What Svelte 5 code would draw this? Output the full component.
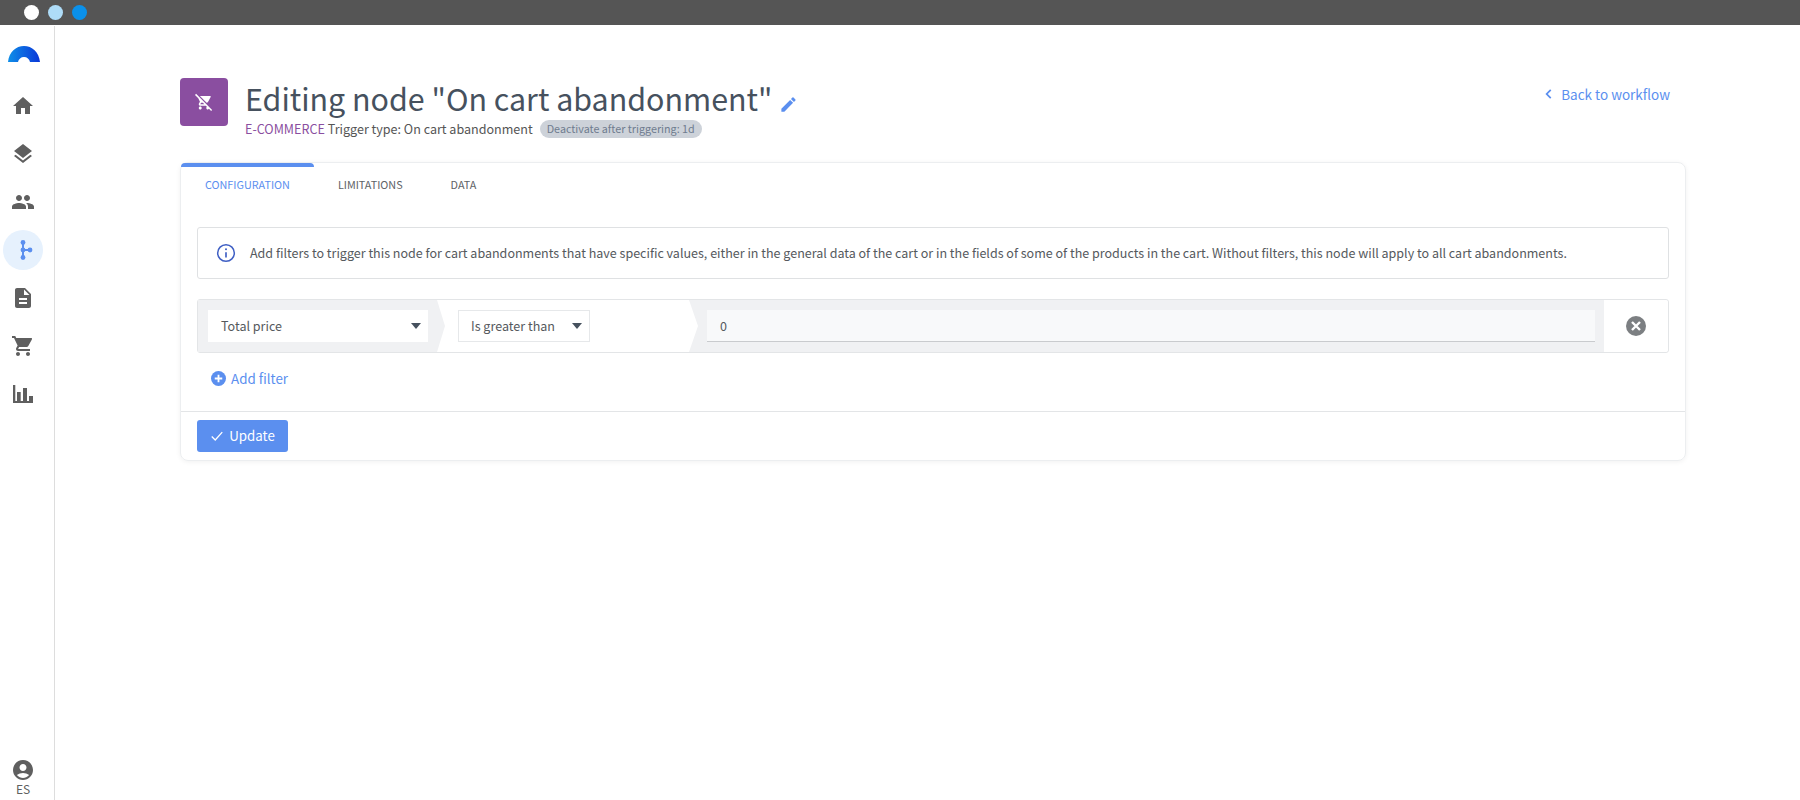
<script>
  const navItems = [
    { name: 'home', d: 'M10 20v-6h4v6h5v-8h3L12 3 2 12h3v8z' },
    { name: 'layers', d: 'M11.99 18.54l-7.37-5.73L3 14.07l9 7 9-7-1.63-1.27-7.38 5.74zM12 16l7.36-5.73L21 9l-9-7-9 7 1.63 1.27L12 16z' },
    { name: 'people', d: 'M16 11c1.66 0 2.99-1.34 2.99-3S17.66 5 16 5c-1.66 0-3 1.34-3 3s1.34 3 3 3zm-8 0c1.66 0 2.99-1.34 2.99-3S9.66 5 8 5C6.34 5 5 6.34 5 8s1.34 3 3 3zm0 2c-2.33 0-7 1.17-7 3.5V19h14v-2.5c0-2.33-4.67-3.5-7-3.5zm8 0c-.29 0-.62.02-.97.05 1.16.84 1.97 1.97 1.97 3.45V19h6v-2.5c0-2.33-4.67-3.5-7-3.5z' },
    { name: 'flow', active: true },
    { name: 'doc', d: 'M14 2H6c-1.1 0-2 .9-2 2v16c0 1.1.9 2 2 2h12c1.1 0 2-.9 2-2V8l-6-6zm2 16H8v-2h8v2zm0-4H8v-2h8v2zm-3-5V3.5L18.5 9H13z' },
    { name: 'cart', d: 'M7 18c-1.1 0-1.99.9-1.99 2S5.9 22 7 22s2-.9 2-2-.9-2-2-2zM1 2v2h2l3.6 7.59-1.35 2.45c-.16.28-.25.61-.25.96 0 1.1.9 2 2 2h12v-2H7.42c-.14 0-.25-.11-.25-.25l.03-.12.9-1.63h7.45c.75 0 1.41-.41 1.75-1.03l3.58-6.49A1 1 0 0 0 20 4H5.21l-.94-2H1zm16 16c-1.1 0-1.99.9-1.99 2s.89 2 1.99 2 2-.9 2-2-.9-2-2-2z' },
    { name: 'chart', d: 'M2 3h2.300v16H22v2H2zM6 10h3.700v9.500H6zM12 6h4v13.500h-4zM18 14h4v5.500h-4z' }
  ];
  const tabs = ['Configuration', 'Limitations', 'Data'];
  let active = 0;
</script>

<div class="topbar">
  <span class="dot white"></span>
  <span class="dot light"></span>
  <span class="dot blue"></span>
</div>

<div class="shell">
  <aside class="sidebar">
    <svg class="logo" viewBox="0 0 32 16" width="32" height="16">
      <defs>
        <linearGradient id="lg" x1="0" x2="1" y1="0" y2="0">
          <stop offset="0" stop-color="#0f8fe8" />
          <stop offset="1" stop-color="#0a36d8" />
        </linearGradient>
      </defs>
      <path d="M0 16C1 6 8 0 16 0s15 6 16 16H22c-.5-3-3-5-6-5s-5.500 2-6 5z" fill="url(#lg)" />
    </svg>
    <nav>
      {#each navItems as item}
        <div class="nav-item" class:active={item.active}>
          {#if item.name === 'flow'}
            <svg viewBox="0 0 24 24" width="24" height="24" fill="#5b8fef">
              <rect x="11" y="3" width="2" height="18" />
              <rect x="11" y="11" width="8" height="2" />
              <circle cx="12" cy="4.500" r="2.400" />
              <circle cx="12" cy="12" r="2.400" />
              <circle cx="12" cy="19.500" r="2.400" />
              <circle cx="19" cy="12" r="2.400" />
            </svg>
          {:else}
            <svg viewBox="0 0 24 24" width="24" height="24" fill="#5f5f5f"><path d={item.d} /></svg>
          {/if}
        </div>
      {/each}
    </nav>
    <div class="user">
      <svg viewBox="0 0 24 24" width="24" height="24" fill="#5f5f5f">
        <path d="M12 2C6.480 2 2 6.480 2 12s4.480 10 10 10 10-4.480 10-10S17.520 2 12 2zm0 4c1.930 0 3.500 1.570 3.500 3.500S13.930 13 12 13s-3.500-1.570-3.500-3.500S10.070 6 12 6zm0 14c-2.030 0-4.430-.82-6.140-2.880C7.620 15.800 9.700 15 12 15s4.380.8 6.140 2.120C16.430 19.180 14.030 20 12 20z" />
      </svg>
      <span>ES</span>
    </div>
  </aside>

  <main>
    <header>
      <div class="node-icon">
        <svg viewBox="0 0 24 24" width="18" height="18" fill="#fff">
          <path d="M1.410 1.130L0 2.540l4.390 4.390 2.210 4.660-1.350 2.450c-.16.280-.25.610-.25.960 0 1.100.9 2 2 2h7.460l1.380 1.380c-.5.360-.83.950-.83 1.620 0 1.100.89 2 1.990 2 .67 0 1.260-.33 1.620-.84L21.460 24l1.410-1.410L1.410 1.130zM7.420 15c-.14 0-.25-.11-.25-.25l.03-.12.9-1.630h2.360l2 2H7.420zm8.130-2c.75 0 1.410-.41 1.750-1.030l3.580-6.490A1 1 0 0 0 20 4H6.540l9.010 9zM7 18c-1.100 0-1.990.9-1.990 2S5.900 22 7 22s2-.9 2-2-.9-2-2-2z" />
        </svg>
      </div>
      <div class="heading">
        <h1>Editing node "On cart abandonment"
          <svg viewBox="0 0 24 24" width="19" height="19" fill="#5b8fef"><path d="M3 17.250V21h3.750L17.810 9.940l-3.750-3.750L3 17.250zM20.710 7.040a1 1 0 0 0 0-1.410l-2.340-2.340a1 1 0 0 0-1.410 0l-1.830 1.830 3.750 3.750 1.830-1.830z" /></svg>
        </h1>
        <div class="subtitle">
          <span class="category">E-COMMERCE</span>
          <span>Trigger type: On cart abandonment</span>
          <span class="badge">Deactivate after triggering: 1d</span>
        </div>
      </div>
      <a class="back" href="#back">
        <svg viewBox="0 0 24 24" width="14" height="14" fill="none" stroke="#5b8fef" stroke-width="3"><path d="M15 5l-7 7 7 7" /></svg>
        Back to workflow
      </a>
    </header>

    <section class="card">
      <div class="tabs">
        {#each tabs as tab, i}
          <div class="tab" class:selected={i === active}>{tab}</div>
        {/each}
      </div>

      <div class="body">
        <div class="info">
          <svg viewBox="0 0 24 24" width="20" height="20" fill="none" stroke="#3f5fc4" stroke-width="1.800">
            <circle cx="12" cy="12" r="10" />
            <path d="M12 11v6.500" stroke-width="2" />
            <circle cx="12" cy="7.500" r="1.200" fill="#3f5fc4" stroke="none" />
          </svg>
          <p>Add filters to trigger this node for cart abandonments that have specific values, either in the general data of the cart or in the fields of some of the products in the cart. Without filters, this node will apply to all cart abandonments.</p>
        </div>

        <div class="filter">
          <div class="segment first">
            <div class="select wide"><span>Total price</span><i class="caret"></i></div>
          </div>
          <div class="segment second">
            <div class="select bordered"><span>Is greater than</span><i class="caret"></i></div>
          </div>
          <div class="segment third">
            <div class="value">0</div>
          </div>
          <div class="remove">
            <svg viewBox="0 0 20 20" width="20" height="20">
              <circle cx="10" cy="10" r="10" fill="#7c7f82" />
              <path d="M6 6l8 8M14 6l-8 8" stroke="#fff" stroke-width="2.400" />
            </svg>
          </div>
        </div>

        <a class="add" href="#add">
          <svg viewBox="0 0 20 20" width="15" height="15">
            <circle cx="10" cy="10" r="10" fill="#5b8fef" />
            <path d="M10 5v10M5 10h10" stroke="#fff" stroke-width="2.400" />
          </svg>
          Add filter
        </a>
      </div>

      <footer>
        <button type="button">
          <svg viewBox="0 0 16 16" width="14" height="14" fill="none" stroke="#fff" stroke-width="1.500"><path d="M2 8.500l4 4 8-9" /></svg>
          Update
        </button>
      </footer>
    </section>
  </main>
</div>

<style>
  :global(body) {
    background: #fff;
    font-family: "Noto Sans CJK JP", "Open Sans", sans-serif;
    color: #4b4f53;
  }
  .topbar {
    height: 25px;
    background: #555;
    display: flex;
    align-items: center;
    gap: 9px;
    padding-left: 24px;
  }
  .dot {
    width: 15px;
    height: 15px;
    border-radius: 50%;
  }
  .white { background: #fff; }
  .light { background: #aedcf8; }
  .blue { background: #0a90ea; }

  .shell {
    display: flex;
    height: 775px;
    overflow: hidden;
  }
  .sidebar {
    width: 54px;
    box-sizing: content-box;
    border-right: 1px solid #ddd;
    display: flex;
    flex-direction: column;
    align-items: flex-start;
    padding-left: 0;
    margin-top: 1px;
  }
  .logo {
    margin-top: 20px;
    margin-left: 8px;
  }
  nav {
    margin-top: 24px;
    margin-left: 3px;
    display: flex;
    flex-direction: column;
    gap: 8px;
  }
  .nav-item {
    width: 40px;
    height: 40px;
    border-radius: 50%;
    display: flex;
    align-items: center;
    justify-content: center;
  }
  .nav-item.active {
    background: #e6f1fd;
  }
  .user {
    margin-top: auto;
    margin-bottom: 4px;
    margin-left: 11px;
    display: flex;
    flex-direction: column;
    align-items: center;
    font-size: 12px;
    line-height: 14px;
    color: #5f5f5f;
  }

  main {
    flex: 1;
    padding: 53px 114px 0 125px;
    min-width: 0;
  }
  header {
    display: flex;
    align-items: flex-start;
    width: 1490px;
  }
  .node-icon {
    width: 48px;
    height: 48px;
    border-radius: 4px;
    background: #8a4ea0;
    display: flex;
    align-items: center;
    justify-content: center;
  }
  .heading {
    margin-left: 17px;
    flex: 1;
  }
  h1 {
    margin: 0;
    font-size: 30.400px;
    font-weight: 400;
    line-height: 40px;
    color: #46515e;
  }
  h1 svg {
    vertical-align: -3px;
  }
  .subtitle {
    display: flex;
    align-items: center;
    gap: 3px;
    font-size: 12.550px;
    line-height: 18px;
    margin-top: 2px;
    color: #555;
  }
  .category { color: #8a4ea0; }
  .badge {
    margin-left: 4px;
    padding: 0 7px;
    border-radius: 9px;
    background: #cdd2d9;
    color: #6f7c8f;
    font-size: 10.750px;
  }
  .back {
    margin-top: 6px;
    display: flex;
    align-items: center;
    gap: 5px;
    font-size: 13.500px;
    line-height: 20px;
    color: #5b8fef;
    text-decoration: none;
  }

  .card {
    margin-top: 24px;
    width: 1506px;
    height: 299px;
    box-sizing: border-box;
    border: 1px solid #eceef0;
    border-radius: 8px;
    box-shadow: 0 1px 5px rgba(0, 0, 0, 0.06);
    display: flex;
    flex-direction: column;
  }
  .tabs {
    display: flex;
    height: 41px;
  }
  .tab {
    padding: 0 24px 4px;
    display: flex;
    align-items: center;
    font-size: 10.800px;
    text-transform: uppercase;
    color: #5e6266;
    border-top: 4px solid transparent;
  }
  .tab.selected {
    color: #5b8fef;
    border-top-color: #5b8fef;
    border-radius: 4px 4px 0 0;
    padding: 0 24px 4px;
  }
  .body {
    flex: 1;
    padding: 23px 16px 0;
  }
  .info {
    height: 52px;
    box-sizing: border-box;
    border: 1px solid #dfe1e3;
    border-radius: 3px;
    display: flex;
    align-items: center;
    gap: 14px;
    padding-left: 18px;
  }
  .info p {
    margin: 0 0 1px;
    font-size: 12.530px;
    color: #55595d;
  }
  .filter {
    margin-top: 20px;
    height: 54px;
    box-sizing: border-box;
    border: 1px solid #e3e5e7;
    border-radius: 3px;
    display: flex;
    align-items: stretch;
  }
  .segment {
    display: flex;
    align-items: center;
    background: #f0f1f3;
  }
  .first {
    width: 247px;
    padding-left: 10px;
    clip-path: polygon(0 0, 239px 0, 100% 50%, 239px 100%, 0 100%);
    box-sizing: border-box;
  }
  .second {
    background: #fff;
    width: 244px;
    padding-left: 13px;
    box-sizing: border-box;
  }
  .third {
    flex: 1;
    padding-left: 18px;
    padding-right: 9px;
    clip-path: polygon(0 0, 100% 0, 100% 100%, 0 100%, 9px 50%);
  }
  .select {
    height: 32px;
    box-sizing: border-box;
    background: #fff;
    display: flex;
    align-items: center;
    justify-content: space-between;
    padding: 0 7px 1px 13px;
    font-size: 12.550px;
    color: #55595d;
  }
  .wide { width: 220px; }
  .bordered {
    width: 132px;
    border: 1px solid #e6e8ea;
    padding-left: 12px;
  }
  .caret {
    width: 0;
    height: 0;
    border-left: 5px solid transparent;
    border-right: 5px solid transparent;
    border-top: 6px solid #46515e;
  }
  .value {
    flex: 1;
    height: 32px;
    box-sizing: border-box;
    background: #f8f9fa;
    border-bottom: 1px solid #c9cbce;
    padding-left: 13px;
    font-size: 12.550px;
    line-height: 31px;
    color: #55595d;
  }
  .remove {
    width: 64px;
    display: flex;
    align-items: center;
    justify-content: center;
    background: #fff;
    border-radius: 0 3px 3px 0;
  }
  .add {
    margin: 15px 0 0 14px;
    display: inline-flex;
    align-items: center;
    gap: 5px;
    font-size: 13.400px;
    line-height: 20px;
    color: #5b8fef;
    text-decoration: none;
  }
  footer {
    height: 49px;
    box-sizing: border-box;
    border-top: 1px solid #e3e5e7;
    padding: 8px 16px 0;
  }
  button {
    width: 91px;
    height: 32px;
    border: 0;
    border-radius: 3px;
    background: #5b8fef;
    color: #fff;
    font-family: inherit;
    font-size: 13.300px;
    display: flex;
    align-items: center;
    justify-content: center;
    gap: 5px;
    padding: 0 0 1px;
  }
</style>
